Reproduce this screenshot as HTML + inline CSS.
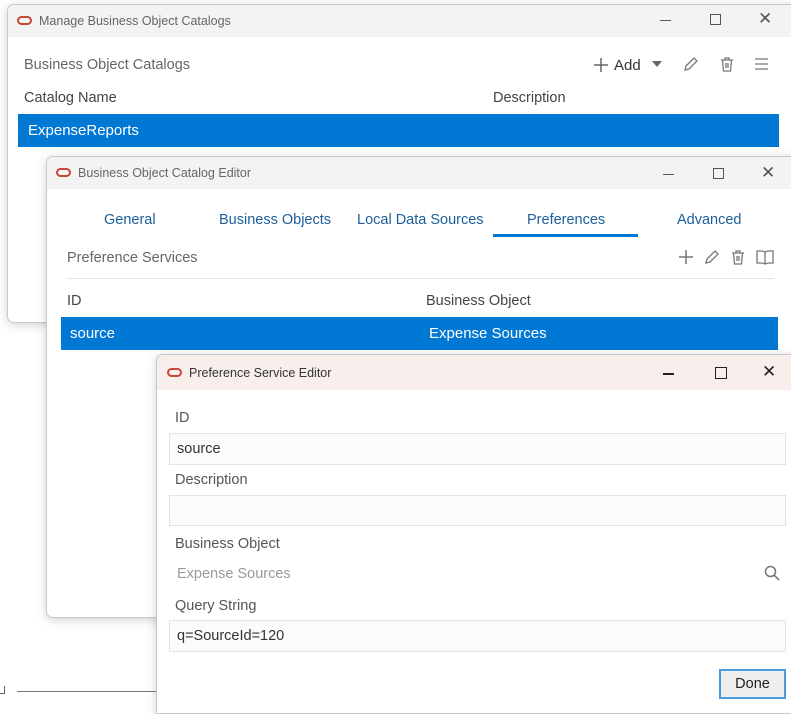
<!DOCTYPE html>
<html><head><style>
*{box-sizing:border-box;margin:0;padding:0}
body{width:791px;height:707px;background:#fff;position:relative;overflow:hidden;font-family:"Liberation Sans",sans-serif;font-size:14px;color:#333}
.a{position:absolute}
.win{position:absolute;background:#fff;border:1px solid #c8c8c8;border-radius:7px;box-shadow:0 2px 10px rgba(0,0,0,.18);overflow:hidden}
.tb{position:absolute;left:0;right:0;top:0;background:#f3f3f3;font-size:12.5px;color:#666}
.logo{position:absolute;width:15px;height:9px;border:2px solid #c74634;border-radius:5px}
.sel{position:absolute;background:#0078d4;color:#fff;font-size:15px}
.lbl{position:absolute;font-size:14.5px;color:#555}
.inp{position:absolute;background:#fbfbfb;border:1px solid #e3e3e3;font-size:14.5px;color:#333;padding:7px 7px}
svg{position:absolute}
</style></head><body>

<div class="win" style="left:7px;top:4px;width:800px;height:319px">
 <div class="tb" style="height:32px">
  <div class="logo" style="left:9px;top:11px"></div>
  <div class="a" style="left:31px;top:9px">Manage Business Object Catalogs</div>
  <div class="a" style="left:652px;top:15px;width:11px;height:1px;background:#555"></div>
  <div class="a" style="left:702px;top:9px;width:11px;height:11px;border:1px solid #555"></div>
  <div class="a" style="left:750px;top:4px;font-size:17px;color:#555">✕</div>
 </div>
 <div class="lbl" style="left:16px;top:52px;color:#666">Business Object Catalogs</div>
 <div class="lbl" style="left:16px;top:85px;color:#444">Catalog Name</div>
 <div class="lbl" style="left:485px;top:85px;color:#444">Description</div>
 <svg style="left:585px;top:52px" width="16" height="16"><path d="M8 1v14M1 8h14" stroke="#666" stroke-width="1.5"/></svg>
 <div class="a" style="left:606px;top:52px;font-size:15px;color:#333">Add</div>
 <svg style="left:644px;top:56px" width="10" height="6"><path d="M0 0h10L5 6z" fill="#666"/></svg>
 <svg style="left:675px;top:51px" width="16" height="16"><path d="M2 14l1-4 8-8 3 3-8 8z" fill="none" stroke="#777" stroke-width="1.3"/></svg>
 <svg style="left:711px;top:51px" width="16" height="16"><path d="M2 4h12M6 4V2h4v2M3.5 4l1 11h7l1-11M7 7v5M9 7v5" fill="none" stroke="#777" stroke-width="1.3"/></svg>
 <svg style="left:747px;top:53px" width="13" height="12"><path d="M0 1h13M0 6h13M0 11h13" stroke="#777" stroke-width="1.3"/></svg>
 <div class="sel" style="left:10px;top:109px;width:761px;height:33px;padding:8px 10px">ExpenseReports</div>
</div>

<div class="win" style="left:46px;top:156px;width:760px;height:462px">
 <div class="tb" style="height:32px">
  <div class="logo" style="left:9px;top:11px"></div>
  <div class="a" style="left:31px;top:9px">Business Object Catalog Editor</div>
  <div class="a" style="left:616px;top:17px;width:11px;height:1px;background:#555"></div>
  <div class="a" style="left:666px;top:11px;width:11px;height:11px;border:1px solid #555"></div>
  <div class="a" style="left:714px;top:6px;font-size:17px;color:#555">✕</div>
 </div>
 <div class="a" style="left:57px;top:55px;font-size:14.5px;color:#1d5e9a">General</div>
 <div class="a" style="left:172px;top:55px;font-size:14.5px;color:#1d5e9a">Business Objects</div>
 <div class="a" style="left:310px;top:55px;font-size:14.5px;color:#1d5e9a">Local Data Sources</div>
 <div class="a" style="left:480px;top:55px;font-size:14.5px;color:#1d5e9a">Preferences</div>
 <div class="a" style="left:630px;top:55px;font-size:14.5px;color:#1d5e9a">Advanced</div>
 <div class="a" style="left:446px;top:77px;width:145px;height:3px;background:#0078d4"></div>
 <div class="lbl" style="left:20px;top:93px;color:#666">Preference Services</div>
 <svg style="left:631px;top:92px" width="16" height="16"><path d="M8 1v14M1 8h14" stroke="#777" stroke-width="1.5"/></svg>
 <svg style="left:657px;top:92px" width="16" height="16"><path d="M2 14l1-4 8-8 3 3-8 8z" fill="none" stroke="#777" stroke-width="1.3"/></svg>
 <svg style="left:683px;top:92px" width="16" height="16"><path d="M2 4h12M6 4V2h4v2M3.5 4l1 11h7l1-11M7 7v5M9 7v5" fill="none" stroke="#777" stroke-width="1.3"/></svg>
 <svg style="left:709px;top:92px" width="18" height="16"><path d="M9 3v12M1 2h5l3 1 3-1h5v12h-5l-3 1-3-1H1z" fill="none" stroke="#777" stroke-width="1.3"/></svg>
 <div class="a" style="left:20px;top:121px;width:707px;height:1px;background:#e2e2e2"></div>
 <div class="lbl" style="left:20px;top:136px;color:#444">ID</div>
 <div class="lbl" style="left:379px;top:136px;color:#444">Business Object</div>
 <div class="sel" style="left:14px;top:160px;width:717px;height:33px;padding:8px 9px">source<span class="a" style="left:368px;top:8px">Expense Sources</span></div>
</div>

<div class="a" style="left:0;top:686px;width:5px;height:8px;border-right:1px solid #666;border-bottom:1px solid #666"></div>
<div class="a" style="left:17px;top:691px;width:145px;height:1px;background:#777"></div>

<div class="win" style="left:156px;top:354px;width:650px;height:360px;border-radius:7px 0 0 0">
 <div class="tb" style="height:35px;background:#f8efed">
  <div class="logo" style="left:10px;top:13px"></div>
  <div class="a" style="left:32px;top:11px;color:#333">Preference Service Editor</div>
  <div class="a" style="left:506px;top:18px;width:11px;height:1.5px;background:#222"></div>
  <div class="a" style="left:558px;top:12px;width:12px;height:12px;border:1.5px solid #222"></div>
  <div class="a" style="left:605px;top:7px;font-size:17px;color:#222">✕</div>
 </div>
 <div class="lbl" style="left:18px;top:55px">ID</div>
 <div class="inp" style="left:12px;top:78px;width:617px;height:32px">source</div>
 <div class="lbl" style="left:18px;top:117px">Description</div>
 <div class="inp" style="left:12px;top:140px;width:617px;height:31px"></div>
 <div class="lbl" style="left:18px;top:181px">Business Object</div>
 <div class="lbl" style="left:20px;top:211px;color:#9a9a9a">Expense Sources</div>
 <svg style="left:607px;top:210px" width="16" height="16"><circle cx="6.5" cy="6.5" r="5" fill="none" stroke="#777" stroke-width="1.5"/><path d="M10 10l5 5" stroke="#777" stroke-width="1.6"/></svg>
 <div class="lbl" style="left:18px;top:243px">Query String</div>
 <div class="inp" style="left:12px;top:265px;width:617px;height:32px">q=SourceId=120</div>
 <div class="a" style="left:562px;top:314px;width:67px;height:30px;border:2px solid #4a9ae0;background:#eee;font-size:14.5px;color:#222;text-align:center;line-height:26px">Done</div>
</div>
</body></html>
